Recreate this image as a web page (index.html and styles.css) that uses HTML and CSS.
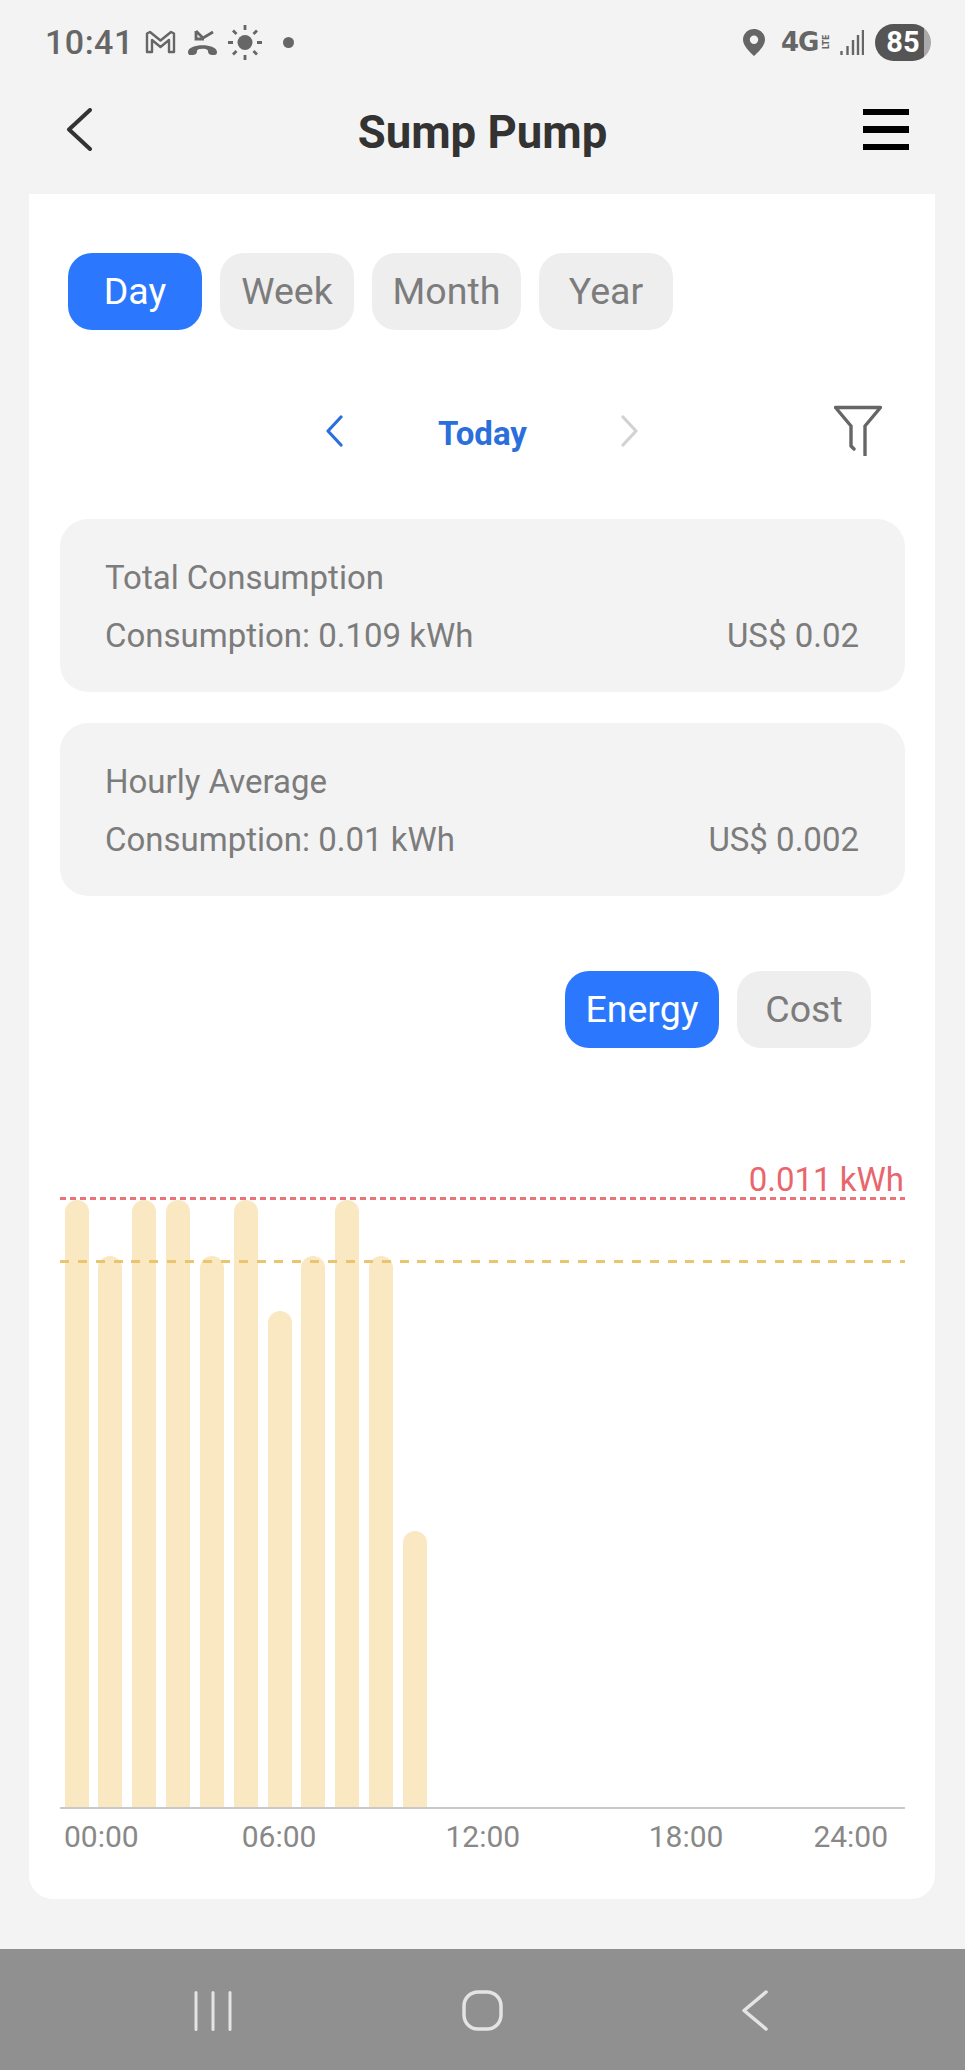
FILE: index.html
```html
<!DOCTYPE html>
<html lang="en">
<head>
<meta charset="utf-8">
<title>Sump Pump</title>
<link rel="stylesheet" href="styles.css">
</head>
<body>
<div class="screen">
  <div class="status">
    <div class="status-left">
      <span class="time">10:41</span>
      <svg class="ic-mail" viewBox="0 0 31 24"><path d="M2 22V3.500L5 2l10.500 8.500L26 2l3 1.500V22h-5V10l-8.500 7L7 10v12z" fill="none" stroke="#666" stroke-width="2.400" stroke-linejoin="round"/></svg>
      <svg class="ic-call" viewBox="0 0 31 26"><path d="M9 2v8h8M9 2l7 7L26 3" fill="none" stroke="#666" stroke-width="2.800"/><path d="M1 23c0-9 29-9 29 0 0 3-2 3-4 3-3 0-5-1-5-4 0-3-11-3-11 0 0 3-2 4-5 4-2 0-4 0-4-3z" fill="#666"/></svg>
      <svg class="ic-sun" viewBox="0 0 34 35"><circle cx="17" cy="17.500" r="7.500" fill="#666"/><path d="M17 0v5M17 30v5M0 17.500h5M29 17.500h5M5 5.500l3.500 3.500M25.500 26l3.500 3.500M29 5.500L25.500 9M8.500 26L5 29.500" stroke="#666" stroke-width="2.800"/></svg>
      <span class="dot"></span>
    </div>
    <div class="status-right">
      <svg class="ic-pin" viewBox="0 0 22 27"><path fill-rule="evenodd" d="M11 0C5 0 0 4.700 0 10.500 0 17 7 23 11 27c4-4 11-10 11-16.500C22 4.700 17 0 11 0zm0 6.500a4.200 4.200 0 1 1 0 8.400 4.200 4.200 0 0 1 0-8.400z" fill="#666"/></svg>
      <span class="net">4G<span class="lte">LTE</span></span>
      <svg class="ic-signal" viewBox="0 0 24 27"><path d="M1.500 22v4M7.500 17v9M13 11v15M18 6v20M23 1v25" stroke="#666" stroke-width="2.400"/></svg>
      <span class="battery">85</span>
    </div>
  </div>

  <header class="header">
    <svg class="ic-back" viewBox="0 0 26 43"><path d="M24 2L3 21.500 24 41" fill="none" stroke="#333" stroke-width="4" stroke-linecap="round" stroke-linejoin="round"/></svg>
    <h1 class="title">Sump Pump</h1>
    <div class="burger"><span></span><span></span><span></span></div>
  </header>

  <main class="card">
    <div class="tabs">
      <span class="pill pill-on pill-day">Day</span>
      <span class="pill pill-week">Week</span>
      <span class="pill pill-month">Month</span>
      <span class="pill pill-year">Year</span>
    </div>

    <div class="datebar">
      <svg class="ic-prev" viewBox="0 0 20 32"><path d="M17 2L4 16l13 14" fill="none" stroke="#2a6fdb" stroke-width="3.200" stroke-linecap="round" stroke-linejoin="round"/></svg>
      <span class="today">Today</span>
      <svg class="ic-next" viewBox="0 0 20 32"><path d="M3 2l13 14L3 30" fill="none" stroke="#d2d2d2" stroke-width="3.200" stroke-linecap="round" stroke-linejoin="round"/></svg>
      <svg class="ic-filter" viewBox="0 0 48 51"><path d="M1.500 2.500h45L31 21v29M17 21v20l3 3M1.500 2.500L17 21" fill="none" stroke="#666" stroke-width="3.400" stroke-linecap="round" stroke-linejoin="round"/></svg>
    </div>

    <section class="box">
      <div class="box-title">Total Consumption</div>
      <div class="box-row"><span>Consumption: 0.109 kWh</span><span>US$ 0.02</span></div>
    </section>
    <section class="box box-second">
      <div class="box-title">Hourly Average</div>
      <div class="box-row"><span>Consumption: 0.01 kWh</span><span>US$ 0.002</span></div>
    </section>

    <div class="toggle">
      <span class="pill pill-on pill-energy">Energy</span>
      <span class="pill pill-cost">Cost</span>
    </div>

    <div class="chart">
      <span class="max-label">0.011 kWh</span>
      <div class="line-max"></div>
      <div class="line-avg"></div>
      <div class="bars">
        <i class="bar" style="height:607px"></i>
        <i class="bar" style="height:551px"></i>
        <i class="bar" style="height:607px"></i>
        <i class="bar" style="height:607px"></i>
        <i class="bar" style="height:551px"></i>
        <i class="bar" style="height:607px"></i>
        <i class="bar" style="height:496px"></i>
        <i class="bar" style="height:551px"></i>
        <i class="bar" style="height:607px"></i>
        <i class="bar" style="height:551px"></i>
        <i class="bar" style="height:276px"></i>
      </div>
    </div>
    <div class="axis">
      <span>00:00</span><span class="t6">06:00</span><span class="t12">12:00</span><span class="t18">18:00</span><span class="t24">24:00</span>
    </div>
  </main>

  <nav class="navbar">
    <svg class="ic-recent" viewBox="0 0 38 40"><path d="M2 1.500v37M19 1.500v37M36 1.500v37" stroke="#e4e4e4" stroke-width="3" stroke-linecap="round"/></svg>
    <svg class="ic-home" viewBox="0 0 41 41"><rect x="2" y="2" width="37" height="37" rx="14" fill="none" stroke="#e4e4e4" stroke-width="3.500"/></svg>
    <svg class="ic-navback" viewBox="0 0 26 41"><path d="M24 2L2 20.500 24 39" fill="none" stroke="#e4e4e4" stroke-width="3.500" stroke-linecap="round" stroke-linejoin="round"/></svg>
  </nav>
</div>
</body>
</html>
```

FILE: styles.css
```css
* { box-sizing: border-box; }
html, body { margin: 0; padding: 0; }
body {
  background: #f3f3f3;
  font-family: Roboto, "Liberation Sans", sans-serif;
  color: #7c7c7c;
}
.screen {
  width: 965px;
  height: 2070px;
  display: flex;
  flex-direction: column;
  overflow: hidden;
  background: #f3f3f3;
}

/* status bar */
.status {
  height: 84px;
  display: flex;
  justify-content: space-between;
  align-items: center;
  padding: 0 34px 0 45px;
}
.status-left, .status-right { display: flex; align-items: center; }
.time { font-size: 34px; font-weight: 500; color: #666; width: 100px; letter-spacing: 0.5px; }
.ic-mail { width: 31px; height: 24px; }
.ic-call { width: 31px; height: 26px; margin-left: 11px; }
.ic-sun { width: 34px; height: 35px; margin-left: 10px; }
.dot { width: 11px; height: 11px; border-radius: 50%; background: #666; margin-left: 21px; }
.ic-pin { width: 22px; height: 27px; }
.net {
  position: relative;
  width: 49px;
  margin-left: 16px;
  font-family: "DejaVu Sans", sans-serif;
  font-size: 26px;
  line-height: 24px;
  font-weight: 700;
  color: #666;
  letter-spacing: -1px;
}
.lte {
  position: absolute;
  right: -5px;
  top: 8px;
  font-size: 8px;
  line-height: 8px;
  letter-spacing: 0;
  transform: rotate(-90deg);
}
.ic-signal { width: 24px; height: 27px; margin-left: 10px; }
.battery {
  width: 56px;
  height: 37px;
  margin-left: 11px;
  border-radius: 19px;
  background: linear-gradient(90deg, #555 0 88%, #aaa 88%);
  color: #fff;
  font-size: 29px;
  font-weight: 700;
  line-height: 37px;
  text-align: center;
}

/* header */
.header {
  height: 110px;
  position: relative;
  display: flex;
  align-items: center;
  justify-content: space-between;
  padding: 0 56px 19px 66px;
}
.ic-back { width: 26px; height: 43px; }
.title {
  position: absolute;
  left: 0;
  right: 0;
  top: 19px;
  margin: 0;
  text-align: center;
  font-size: 45.500px;
  line-height: 60px;
  font-weight: 700;
  color: #333;
}
.burger { width: 46px; display: flex; flex-direction: column; gap: 11px; }
.burger span { height: 6.500px; background: #000; }

/* card */
.card {
  width: 906px;
  height: 1705px;
  margin-left: 29px;
  background: #fff;
  border-radius: 0 0 24px 24px;
  padding: 59px 30px 0 31px;
}
.tabs { display: flex; gap: 18px; padding-left: 8px; }
.pill {
  height: 77px;
  border-radius: 24px;
  background: #eee;
  color: #7c7c7c;
  font-size: 37.500px;
  line-height: 77px;
  text-align: center;
}
.pill-on { background: #2b78fe; color: #fff; }
.pill-day, .pill-week, .pill-year { width: 134px; }
.pill-month { width: 149px; }
.pill-energy { width: 154px; }
.pill-cost { width: 134px; }

.datebar {
  position: relative;
  height: 60px;
  margin-top: 73px;
  display: flex;
  align-items: center;
  justify-content: center;
  gap: 92px;
  padding-right: 2px;
}
.today { font-size: 33px; font-weight: 700; color: #2a6fdb; width: 90px; margin-left: 2px; text-align: center; }
.ic-prev, .ic-next { width: 20px; height: 32px; margin-bottom: 4px; }
.ic-filter { position: absolute; right: 23px; top: 2px; width: 48px; height: 51px; }

.box {
  height: 173px;
  margin-top: 56px;
  border-radius: 28px;
  background: #f3f3f3;
  padding: 40px 46px 0 45px;
  font-size: 33px;
  line-height: 38px;
  color: #7c7c7c;
}
.box-second { margin-top: 31px; }
.box-row { display: flex; justify-content: space-between; margin-top: 20px; }

.toggle { display: flex; justify-content: flex-end; gap: 18px; margin-top: 75px; padding-right: 34px; }

.chart { position: relative; height: 648px; margin-top: 113px; border-bottom: 2px solid #c9c9c9; }
.max-label {
  position: absolute;
  right: 1px;
  top: 0;
  font-size: 33px;
  line-height: 38px;
  color: #e8666c;
}
.line-max {
  position: absolute;
  left: 0; right: 0;
  top: 36px;
  height: 3px;
  background: repeating-linear-gradient(90deg, #e8747a 0 6px, transparent 6px 10px);
  z-index: 2;
}
.line-avg {
  position: absolute;
  left: 0; right: 0;
  top: 99px;
  height: 3px;
  background: repeating-linear-gradient(90deg, #e9c56f 0 9px, transparent 9px 17.870px);
  z-index: 2;
}
.bars {
  position: absolute;
  left: 4.500px;
  bottom: 0;
  display: flex;
  align-items: flex-end;
  gap: 9.850px;
}
.bar {
  display: block;
  width: 24px;
  background: #fae8c3;
  border-radius: 12px 12px 0 0;
}

.axis {
  display: flex;
  padding-left: 4px;
  margin-top: 10px;
  font-size: 30px;
  line-height: 36px;
  color: #888;
}
.t6 { margin-left: 103px; }
.t12 { margin-left: 129px; }
.t18 { margin-left: 128.500px; }
.t24 { margin-left: 90px; }

/* nav bar */
.navbar {
  position: relative;
  margin-top: 50px;
  height: 121px;
  background: #909090;
  display: flex;
  align-items: center;
  padding: 2px 0 0 194px;
}
.ic-recent { width: 38px; height: 40px; }
.ic-home { width: 41px; height: 41px; margin-left: 230px; }
.ic-navback { width: 26px; height: 41px; margin-left: 239px; }
```
